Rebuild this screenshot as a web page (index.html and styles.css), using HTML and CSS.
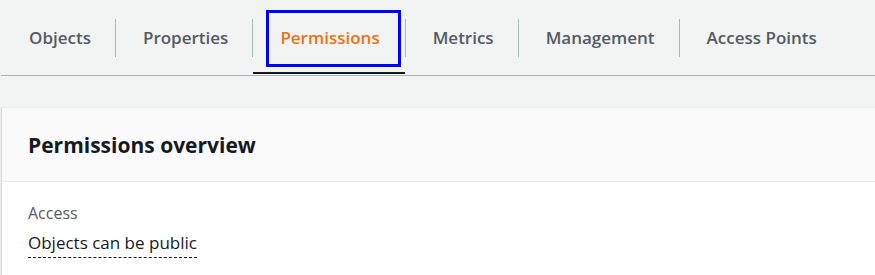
FILE: index.html
```html
<!DOCTYPE html>
<html>
<head>
    <title>Bucket permissions</title>
    <link rel="stylesheet" href="styles.css">
</head>
<body>

    <nav class="tabs">
        <a class="tab">Objects</a>
        <span class="sep"></span>
        <a class="tab">Properties</a>
        <span class="sep"></span>
        <a class="tab active"><span class="focus-box">Permissions</span></a>
        <span class="sep"></span>
        <a class="tab">Metrics</a>
        <span class="sep"></span>
        <a class="tab">Management</a>
        <span class="sep"></span>
        <a class="tab">Access Points</a>
    </nav>

    <section class="panel">
        <div class="panel-header">
            <h2>Permissions overview</h2>
        </div>
        <div class="panel-body">
            <div class="field-label">Access</div>
            <div class="field-value"><span class="dotted">Objects can be public</span></div>
        </div>
    </section>

</body>
</html>
```

FILE: styles.css
```css
body {
    margin: 0;
    padding-left: 1px;
    background: #f2f3f3;
    font-family: 'Open Sans', 'Liberation Sans', sans-serif;
    color: #16191f;
    overflow: hidden;
}

.tabs {
    display: flex;
    height: 75px;
    border-bottom: 1px solid #aab7b8;
}

.tab {
    display: flex;
    align-items: center;
    box-sizing: border-box;
    height: 74px;
    padding: 3px 24px 1px 27px;
    border-bottom: 2px solid transparent;
    font-size: 17px;
    font-weight: 600;
    color: #545b64;
    white-space: nowrap;
}

.tab:first-child {
    padding-left: 28px;
}

.tab.active {
    padding: 5px 4px 1px 13px;
    border-bottom-color: #16191f;
    color: #ec7211;
}

.focus-box {
    display: flex;
    align-items: center;
    box-sizing: border-box;
    height: 57px;
    padding: 0 18px 2px 11px;
    border: 3px solid #0000ff;
}

.sep {
    width: 1px;
    height: 38px;
    margin-top: 19px;
    background: #aab7b8;
}

.panel {
    margin-top: 31px;
    background: #fff;
    border: 1px solid #eaeded;
    border-left-color: #d5dbdb;
    border-right: none;
    box-shadow: 0 1px 1px 0 rgba(0, 28, 36, 0.15);
}

.panel-header {
    display: flex;
    align-items: center;
    height: 73px;
    padding: 0 26px;
    background: #fafafa;
    border-bottom: 1px solid #eaeded;
}

h2 {
    margin: 0;
    padding-top: 1px;
    font-size: 21px;
    font-weight: bold;
}

.panel-body {
    padding: 19px 26px 20px;
}

.field-label {
    font-size: 16px;
    color: #545b64;
    line-height: 24px;
}

.field-value {
    margin-top: 6px;
    font-size: 17px;
    line-height: 24px;
}

.dotted {
    border-bottom: 1px dashed #16191f;
    padding-bottom: 3px;
}
```
